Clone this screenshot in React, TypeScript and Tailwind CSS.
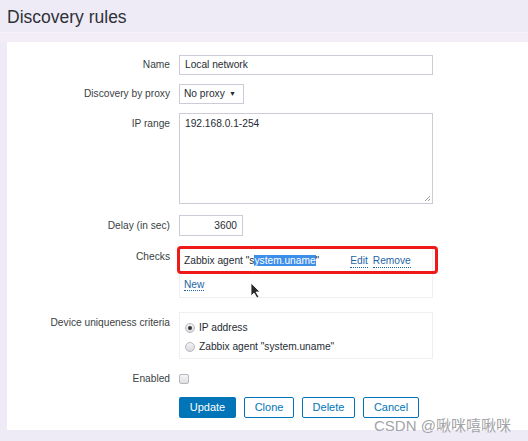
import React from "react";

const F = { fontFamily: '"Liberation Sans", Arial, sans-serif' };

function Row({ label, children, top = false, labelClass = "" }: { label: string; children: React.ReactNode; top?: boolean; labelClass?: string }) {
  return (
    <div className={`flex ${top ? "items-start" : "items-center"}`}>
      <div className={`w-[163px] shrink-0 text-right text-[10.2px] text-[#3a3f44] ${labelClass}`}>{label}</div>
      <div className="ml-[9px]">{children}</div>
    </div>
  );
}

function Link({ children, className = "" }: { children: React.ReactNode; className?: string }) {
  return (
    <span className={`text-[#1f65a6] border-b border-dotted border-[#1f65a6] leading-[12px] ${className}`}>{children}</span>
  );
}

function Radio({ checked }: { checked?: boolean }) {
  return (
    <span className="inline-flex w-[10px] h-[10px] rounded-full border border-[#b8b8c0] bg-gradient-to-b from-[#f4f4f6] to-[#d9d9de] items-center justify-center">
      {checked && <span className="w-[4px] h-[4px] rounded-full bg-[#333]" />}
    </span>
  );
}

export default function App() {
  return (
    <div style={F} className="w-[528px] h-[441px] bg-[#efebf6] relative overflow-hidden">
      <div className="h-[33px] flex items-end pl-[7px] pb-[4px] border-b border-[#f7f3fa]">
        <h1 className="text-[17.5px] leading-[22px] text-[#2e3237]">Discovery rules</h1>
      </div>
      <div className="h-[9px] bg-[#f2edf6]" />
      <div className="ml-[7px] bg-white h-[388px] pt-[13px]">
        <Row label="Name">
          <div className="w-[254px] h-[20px] border border-[#cfcbd6] px-[5px] text-[10.2px] leading-[18px] text-[#1f2c33]">Local network</div>
        </Row>
        <div className="h-[9px]" />
        <Row label="Discovery by proxy">
          <div className="w-[65px] h-[20px] border border-[#cfcbd6] pl-[4px] pr-[7px] text-[10.2px] leading-[18px] text-[#1f2c33] flex justify-between items-center">
            <span>No proxy</span>
            <span className="text-[7px]">▼</span>
          </div>
        </Row>
        <div className="h-[9px]" />
        <Row label="IP range" top labelClass="pt-[3px]">
          <div className="relative w-[254px] h-[91px] border border-[#cfcbd6] px-[5px] pt-[3px] text-[10.2px] leading-[14px] text-[#1f2c33]">
            192.168.0.1-254
            <svg className="absolute right-[1px] bottom-[1px]" width="7" height="7" viewBox="0 0 7 7">
              <path d="M6 1L1 6M6 4L4 6" stroke="#999" strokeWidth="1" />
            </svg>
          </div>
        </Row>
        <div className="h-[11px]" />
        <Row label="Delay (in sec)">
          <div className="w-[64px] h-[21px] border border-[#cfcbd6] px-[5px] text-[10.2px] leading-[19px] text-[#1f2c33] text-right">3600</div>
        </Row>
        <div className="h-[12px]" />
        <Row label="Checks" top labelClass="pt-[1px]">
          <div className="w-[254px] h-[50px] border border-[#f0eef2] text-[10.2px] text-[#1f2c33] relative">
            <div className="flex items-center h-[24px] pl-[4px]">
              <span>
                Zabbix agent "s<span className="bg-[#3d8ee8] text-white">ystem.uname</span>"
              </span>
              <Link className="ml-[31px]">Edit</Link>
              <Link className="ml-[5px]">Remove</Link>
            </div>
            <div className="pl-[4px] pt-[4px]">
              <Link>New</Link>
            </div>
            <div className="absolute left-[-3px] top-[-3px] w-[261px] h-[28px] border-[3px] border-[#ee1a1a] rounded-[4px]" />
            <svg className="absolute left-[70px] top-[33px]" width="12" height="17" viewBox="0 0 12 17">
              <path d="M1 1 L1 14 L4 11 L7 16 L9 15 L6 10 L10 10 Z" fill="#2a2a2a" stroke="#fff" strokeWidth="0.8" />
            </svg>
          </div>
        </Row>
        <div className="h-[14px]" />
        <Row label="Device uniqueness criteria" top labelClass="pt-[3px]">
          <div className="w-[254px] h-[47px] border border-[#f0eef2] text-[10.2px] text-[#1f2c33] pl-[5px] pt-[8px] flex flex-col gap-[6px]">
            <div className="flex items-center gap-[4px] h-[13px]"><Radio checked /><span>IP address</span></div>
            <div className="flex items-center gap-[4px] h-[13px]"><Radio /><span>Zabbix agent "system.uname"</span></div>
          </div>
        </Row>
        <div className="h-[10px]" />
        <Row label="Enabled">
          <div className="h-[20px] flex items-center">
            <span className="w-[10px] h-[10px] rounded-[2px] border border-[#b8b8c0] bg-gradient-to-b from-[#f4f4f6] to-[#e0e0e4]" />
          </div>
        </Row>
        <div className="h-[8px]" />
        <div className="flex pl-[172px] gap-[8px] text-[11px]">
          <button className="w-[57px] h-[21px] bg-[#0275b8] text-white rounded-[2px]">Update</button>
          <button className="w-[50px] h-[21px] border border-[#0275b8] text-[#0275b8] bg-white rounded-[2px]">Clone</button>
          <button className="w-[53px] h-[21px] border border-[#0275b8] text-[#0275b8] bg-white rounded-[2px]">Delete</button>
          <button className="w-[56px] h-[21px] border border-[#0275b8] text-[#0275b8] bg-white rounded-[2px]">Cancel</button>
        </div>
      </div>
      <div
        className="absolute left-[374px] top-[416px] text-[15px] leading-[20px] text-[#a4a4a8]"
        style={{ fontFamily: '"Liberation Sans", "Noto Sans CJK SC", sans-serif' }}
      >
        CSDN @啾咪嘻啾咪
      </div>
    </div>
  );
}
